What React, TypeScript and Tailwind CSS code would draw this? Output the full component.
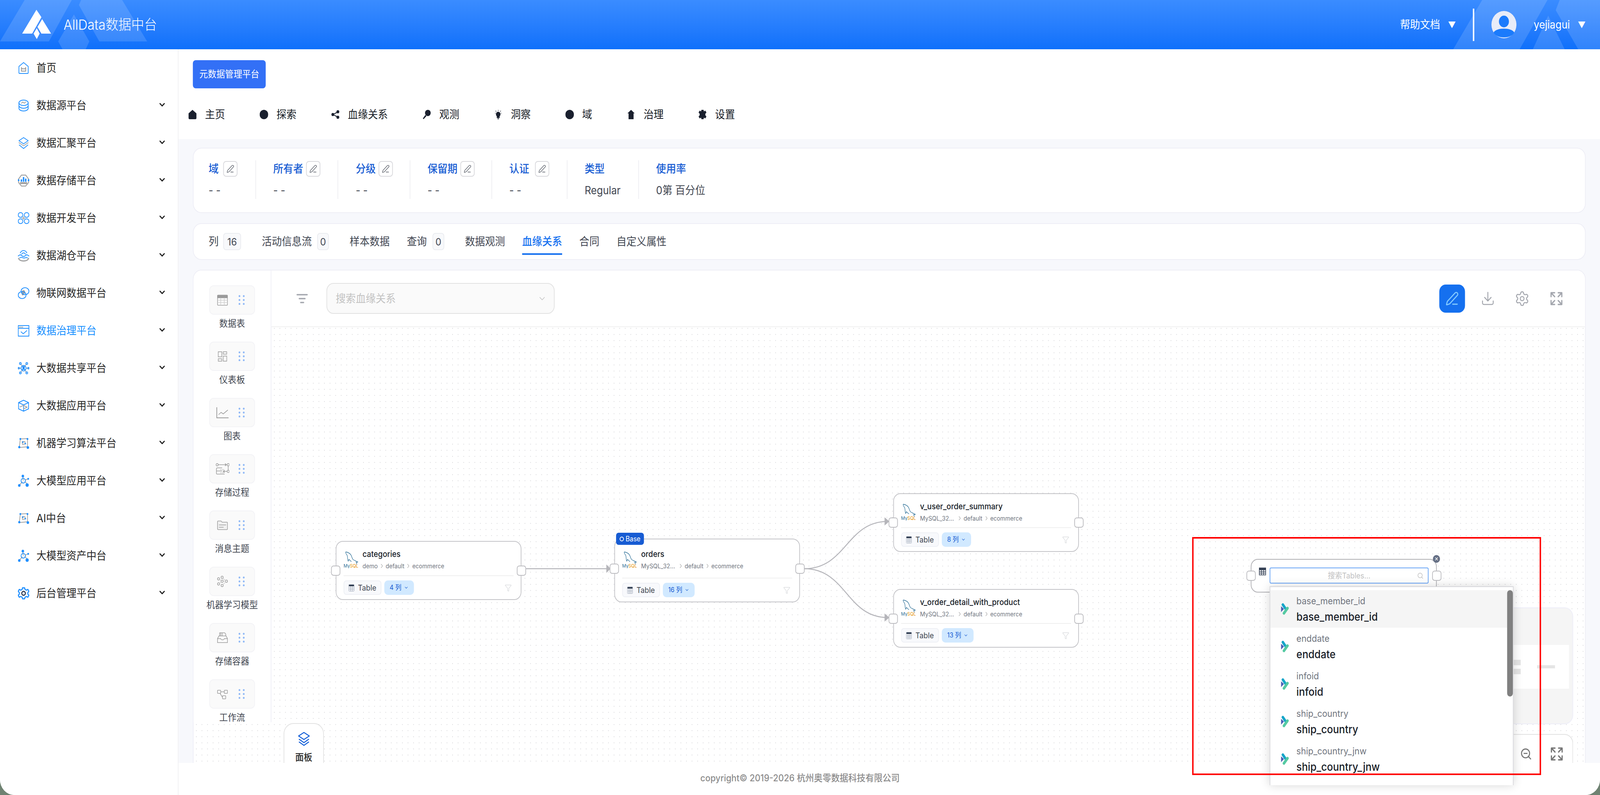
import React from 'react';
import { ChevronDown, Search, Funnel, PenLine, Settings, ZoomOut } from 'lucide-react';

const BLUE = '#1f8fff';
const GRAY = '#a3a3a3';

const sideIcon = (children: React.ReactNode) => (
  <svg width="32" height="32" viewBox="0 0 32 32" fill="none" stroke={BLUE} strokeWidth="2" strokeLinecap="round" strokeLinejoin="round">
    {children}
  </svg>
);

const MlIcon = () =>
  sideIcon(
    <>
      <path d="M7 5 L27 4 L27 25 L4 27 Z M12 12 L20 12 L20 18 L13 19 Z" stroke={GRAY} />
      <g fill={BLUE} stroke="none">
        <circle cx="7" cy="5" r="2.5" />
        <circle cx="27" cy="5" r="2.5" />
        <circle cx="4" cy="26" r="3" />
        <circle cx="28" cy="27" r="3.5" />
        <circle cx="14" cy="13" r="2" />
        <circle cx="21" cy="17" r="2" />
      </g>
    </>
  );

const ModelIcon = () =>
  sideIcon(
    <>
      <path d="M14 6 L15 15 M5 27 L12 19 M20 18 L27 26 M21 14 L29 11" stroke={GRAY} />
      <circle cx="15" cy="16" r="6" />
      <g fill={BLUE} stroke="none">
        <circle cx="14" cy="4" r="3.5" />
        <circle cx="4" cy="28" r="3.5" />
        <circle cx="26" cy="27" r="4.5" />
        <circle cx="29" cy="11" r="2.5" />
      </g>
    </>
  );

const sideItems: { label: string; icon: React.ReactNode; active?: boolean; noArrow?: boolean }[] = [
  {
    label: '首页',
    noArrow: true,
    icon: sideIcon(
      <>
        <path d="M16 2 L29 12 V28 a2 2 0 0 1 -2 2 H5 a2 2 0 0 1 -2 -2 V12 Z" />
        <path d="M10 15 L12 18 H20 L22 15 V24 H10 Z" stroke={GRAY} strokeWidth="2.5" />
      </>
    ),
  },
  {
    label: '数据源平台',
    icon: sideIcon(
      <>
        <ellipse cx="16" cy="9" rx="13" ry="7" />
        <path d="M3 9 v7 c0 4 6 7 13 7 s13 -3 13 -7 V9 M3 16 v7 c0 4 6 7 13 7 s13 -3 13 -7 v-7" />
        <path d="M10 10 l4 -3 l4 3 l4 -3" stroke={GRAY} />
      </>
    ),
  },
  {
    label: '数据汇聚平台',
    icon: sideIcon(
      <>
        <path d="M16 2 L29 10 L16 18 L3 10 Z" />
        <path d="M3 15 L16 23 L29 15" stroke={GRAY} />
        <path d="M4 21 L16 30 L28 21" />
      </>
    ),
  },
  {
    label: '数据存储平台',
    icon: sideIcon(
      <>
        <path d="M10 2 H22 L30 12 V21 L22 30 H10 L2 21 V12 Z" stroke={GRAY} strokeWidth="2.5" />
        <path d="M7 21 H25 V24 H7 Z" fill={GRAY} stroke={GRAY} />
        <path d="M10 19 V13 M16 19 V7 M22 19 V11" strokeWidth="4" strokeLinecap="butt" />
        <circle cx="2" cy="15" r="1.5" fill={BLUE} />
        <circle cx="30" cy="15" r="1.5" fill={BLUE} />
      </>
    ),
  },
  {
    label: '数据开发平台',
    icon: sideIcon(
      <>
        <rect x="1" y="2" width="13" height="12" rx="6" />
        <rect x="18" y="2" width="13" height="12" rx="6" />
        <rect x="1" y="18" width="13" height="12" rx="6" />
        <rect x="18" y="18" width="13" height="12" rx="6" />
        <path d="M16 12 V20 M12 16 H20" stroke={GRAY} />
      </>
    ),
  },
  {
    label: '数据湖仓平台',
    icon: sideIcon(
      <>
        <path d="M7 9 C11 1 21 1 25 9 M11 12 C13 8 19 8 21 12" />
        <path d="M1 17 C5 13 8 13 11 16 C14 19 18 19 21 16 C24 13 27 13 31 17 M5 22 C9 19 12 21 16 22 C20 23 23 19 27 22" />
        <path d="M2 23 C5 32 27 32 30 23" stroke={GRAY} strokeWidth="3" />
      </>
    ),
  },
  {
    label: '物联网数据平台',
    icon: sideIcon(
      <>
        <path d="M12 10 C16 7 22 9 20 15 C18 21 12 24 11 20 C10 16 10 12 12 10 Z" fill={GRAY} stroke="none" />
        <ellipse cx="20" cy="11" rx="11" ry="9" />
        <ellipse cx="12" cy="21" rx="11" ry="9" />
      </>
    ),
  },
  {
    label: '数据治理平台',
    active: true,
    icon: sideIcon(
      <>
        <rect x="1" y="3" width="30" height="27" />
        <path d="M1 10 H31" />
        <path d="M9 19 L15 24 L25 16" />
        <path d="M4 7 H14" stroke={GRAY} strokeDasharray="2 2" />
      </>
    ),
  },
  {
    label: '大数据共享平台',
    icon: sideIcon(
      <>
        <path d="M8 5 L13 12 M24 5 L19 12 M8 27 L13 20 M24 27 L19 20 M3 16 H9 M23 16 H29" stroke={GRAY} />
        <circle cx="16" cy="16" r="7" />
        <circle cx="16" cy="14" r="2.5" fill={BLUE} />
        <path d="M12 20 C13 17 19 17 20 20" fill={BLUE} />
        <circle cx="7" cy="4" r="2.5" />
        <circle cx="25" cy="4" r="2.5" />
        <circle cx="7" cy="28" r="2.5" />
        <circle cx="25" cy="28" r="2.5" />
        <circle cx="2.5" cy="16" r="2" />
        <circle cx="29.5" cy="16" r="2" />
      </>
    ),
  },
  {
    label: '大数据应用平台',
    icon: sideIcon(
      <>
        <path d="M16 2 L30 8 V24 L16 30 L2 24 V8 Z M2 8 L16 14 L30 8 M16 14 V30" />
        <path d="M6 19 L16 15 L26 20 L16 24" stroke={GRAY} />
      </>
    ),
  },
  { label: '机器学习算法平台', icon: <MlIcon /> },
  { label: '大模型应用平台', icon: <ModelIcon /> },
  { label: 'AI中台', icon: <MlIcon /> },
  { label: '大模型资产中台', icon: <ModelIcon /> },
  {
    label: '后台管理平台',
    icon: sideIcon(
      <>
        <path d="M13 2 H19 L20 6 L24 8 L28 6 L31 11 L28 14 V18 L31 21 L28 26 L24 24 L20 26 L19 30 H13 L12 26 L8 24 L4 26 L1 21 L4 18 V14 L1 11 L4 6 L8 8 L12 6 Z" strokeWidth="3" />
        <circle cx="16" cy="16" r="5" stroke="#2b3a55" strokeWidth="3" />
      </>
    ),
  },
];

const navIcon = (path: React.ReactNode) => (
  <svg width="24" height="24" viewBox="0 0 24 24" fill="#1a202e">
    {path}
  </svg>
);

const navItems: { label: string; icon: React.ReactNode }[] = [
  { label: '主页', icon: navIcon(<path d="M12 0 L23 9 V21 a3 3 0 0 1 -3 3 H4 a3 3 0 0 1 -3 -3 V9 Z" />) },
  { label: '探索', icon: navIcon(<circle cx="12" cy="12" r="12" />) },
  {
    label: '血缘关系',
    icon: navIcon(
      <>
        <circle cx="19" cy="5" r="4" />
        <circle cx="5" cy="12" r="4" />
        <circle cx="19" cy="19" r="4" />
        <path d="M5 11 L19 4 V7 L7 12 L19 17 V20 L5 13 Z" />
      </>
    ),
  },
  {
    label: '观测',
    icon: navIcon(
      <>
        <circle cx="15" cy="8" r="8" />
        <path d="M8 13 L1 22 L3 24 L11 16 Z" />
      </>
    ),
  },
  {
    label: '洞察',
    icon: navIcon(
      <>
        <path d="M12 5 a6.5 6.5 0 0 1 4 11.5 V21 H8 V16.5 A6.5 6.5 0 0 1 12 5 Z" />
        <path d="M10 22 H14 V24 H10 Z M11.5 0 H12.5 V3 H11.5 Z M3 8 H5 V9 H3 Z M19 8 H21 V9 H19 Z M5 2 L7 4 L6 5 L4 3 Z M19 2 L20 3 L18 5 L17 4 Z" />
      </>
    ),
  },
  { label: '域', icon: navIcon(<circle cx="12" cy="12" r="12" />) },
  { label: '治理', icon: navIcon(<path d="M12 0 L22 9 H19 V24 H5 V9 H2 Z" />) },
  {
    label: '设置',
    icon: navIcon(
      <path d="M9 0 H15 L16 4 L20 2 L23 7 L20 10 V14 L23 17 L20 22 L16 20 L15 24 H9 L8 20 L4 22 L1 17 L4 14 V10 L1 7 L4 2 L8 4 Z" />
    ),
  },
];

const Dots = () => (
  <div className="grid grid-cols-[5px_5px] gap-x-[7px] gap-y-[5px]">
    {[0, 1, 2, 3, 4, 5].map((i) => (
      <span key={i} className="h-[5px] w-[5px] rounded-full bg-[#8fb8f6]" />
    ))}
  </div>
);

const panelIcon = (w: number, children: React.ReactNode) => (
  <svg width={w} height="30" viewBox={`0 0 ${w} 30`} fill="none" stroke="#9a9a9a" strokeWidth="1.6">
    {children}
  </svg>
);

const panelItems: { label: string; icon: React.ReactNode }[] = [
  {
    label: '数据表',
    icon: panelIcon(
      30,
      <>
        <rect x="1" y="2" width="28" height="26" rx="2" />
        <path d="M1 3 H29 V9 H1 Z" fill="#9a9a9a" />
        <path d="M1 15 H29 M1 21 H29 M10 9 V28 M20 9 V28" stroke="#cfcfcf" />
      </>
    ),
  },
  {
    label: '仪表板',
    icon: panelIcon(
      26,
      <>
        <rect x="1" y="3" width="10" height="13" />
        <rect x="1" y="21" width="10" height="6" />
        <rect x="15" y="3" width="10" height="6" />
        <rect x="15" y="14" width="10" height="13" />
      </>
    ),
  },
  {
    label: '图表',
    icon: panelIcon(
      36,
      <>
        <path d="M2 1 V28 H35" strokeWidth="2" />
        <path d="M7 20 L14 14 L20 18 L33 8" />
      </>
    ),
  },
  {
    label: '存储过程',
    icon: panelIcon(
      38,
      <>
        <circle cx="4" cy="4" r="3" />
        <circle cx="35" cy="4" r="3" />
        <circle cx="35" cy="21" r="3" />
        <path d="M7 4 H29 M26 1 L30 4 L26 7 M35 7 V18 M32 21 H22 M25 18 L21 21 L25 24" />
        <path d="M18 12 H5 a3 3 0 0 0 -3 3 V26 a2 2 0 0 0 2 2 H25 M2 20 H18" />
        <path d="M14 15 V18 M18 15 V18 M22 15 V18 M14 23 V26 M18 23 V26 M22 23 V26" stroke="#b5b5b5" />
      </>
    ),
  },
  {
    label: '消息主题',
    icon: panelIcon(
      30,
      <>
        <path d="M1 6 a2 2 0 0 1 2 -2 H11 L14 7 H27 a2 2 0 0 1 2 2 V24 a2 2 0 0 1 -2 2 H3 a2 2 0 0 1 -2 -2 Z" fill="#f1f1f1" />
        <path d="M5 14 H25 M5 20 H18" />
      </>
    ),
  },
  {
    label: '机器学习模型',
    icon: panelIcon(
      30,
      <>
        <circle cx="4" cy="8" r="3" />
        <circle cx="4" cy="21" r="3" />
        <circle cx="14" cy="4" r="3" />
        <circle cx="14" cy="14" r="3" />
        <circle cx="14" cy="25" r="3" />
        <circle cx="26" cy="14" r="3" />
        <path d="M7 9 L11 13 M7 20 L11 15 M17 14 H23 M16 7 L24 12 M16 23 L24 16" stroke="#cfcfcf" />
      </>
    ),
  },
  {
    label: '存储容器',
    icon: panelIcon(
      30,
      <>
        <path d="M1 17 L5 10 H25 L29 17 V27 H1 Z" />
        <path d="M7 10 V2 H21 L24 5 V10 M10 2 V10 M14 2 V10" />
        <path d="M1 17 H10 a5 3 0 0 0 10 0 H29" />
      </>
    ),
  },
  {
    label: '工作流',
    icon: panelIcon(
      30,
      <>
        <rect x="1" y="5" width="9" height="8" rx="1" />
        <rect x="20" y="5" width="9" height="8" rx="1" />
        <rect x="15" y="19" width="9" height="8" rx="1" />
        <path d="M10 9 H20 M8 13 L15 23" />
      </>
    ),
  },
];

const MySqlLogo = () => (
  <svg width="44" height="44" viewBox="0 0 44 44" fill="none" className="shrink-0">
    <path
      d="M6 2 C12 3 17 5 20 9 C24 14 23 19 27 22 C32 24 36 27 40 28 L35 29 L38 34 M6 2 C5 5 8 8 10 11 C12 15 10 19 13 26 L15 21 C17 23 19 25 22 27"
      stroke="#2b6e96"
      strokeWidth="1.3"
      strokeLinejoin="round"
    />
    <text x="0" y="42" fontSize="12" fontFamily="Inter, sans-serif">
      <tspan fill="#2b6e96">My</tspan>
      <tspan fill="#e48e00">SQL</tspan>
    </text>
  </svg>
);

const TableGlyph = () => (
  <svg width="16" height="18" viewBox="0 0 16 18" fill="none" className="shrink-0">
    <rect x="0.5" y="0.5" width="15" height="17" rx="1.5" stroke="#98a2b3" />
    <path d="M1 1 H15 V5 H1 Z" fill="#344054" />
    <path d="M1 9 H15 M1 13 H15 M5.5 5 V17 M10.5 5 V17" stroke="#98a2b3" />
  </svg>
);

const Handle = ({ className }: { className: string }) => (
  <span className={`absolute h-[26px] w-[26px] rounded-[7px] border-2 border-[#bcbcc0] bg-white ${className}`} />
);

const Crumb = () => (
  <svg width="6" height="12" viewBox="0 0 6 12" fill="none" stroke="#999" strokeWidth="1.2" className="mx-[8px]">
    <path d="M1 1 L5 6 L1 11" />
  </svg>
);

const TableNode = ({
  className,
  title,
  source,
  count,
}: {
  className: string;
  title: string;
  source: string;
  count: string;
}) => (
  <div className={`absolute flex w-[520px] flex-col rounded-[20px] border-2 border-[#c4c4c8] bg-white px-[20px] ${className}`}>
    <div className="flex flex-1 items-center gap-[9px] pt-[6px]">
      <MySqlLogo />
      <div className="min-w-0">
        <div className="text-[21px] leading-[32px] font-medium text-[#181d27]">{title}</div>
        <div className="flex items-center text-[16px] leading-[28px] text-[#717680]">
          <span className={source === 'demo' ? '' : 'w-[100px]'}>{source}</span>
          <Crumb />
          <span>default</span>
          <Crumb />
          <span>ecommerce</span>
        </div>
      </div>
    </div>
    <div className="flex items-center gap-[8px] border-t-2 border-[#efefef] pt-[11px] pb-[11px]">
      <span className="flex h-[37px] w-[106px] items-center justify-center gap-[10px] rounded-[8px] border-2 border-[#eef0f5] bg-[#f8f9fc] text-[20px] text-[#414651]">
        <TableGlyph />
        Table
      </span>
      <span className="flex h-[37px] items-center gap-[7px] rounded-[10px] bg-[#d1e9ff] px-[15px] text-[17px] text-[#175cd3]">
        {count} 列
        <ChevronDown size={13} />
      </span>
      <Funnel size={20} className="mr-[5px] ml-auto text-[#d5d7da]" strokeWidth={1.5} />
    </div>
  </div>
);

const ExpandIcon = ({ color }: { color: string }) => (
  <svg width="34" height="34" viewBox="0 0 34 34" fill="none" stroke={color} strokeWidth="3.4" strokeLinecap="round" strokeLinejoin="round">
    <path d="M2 12 V2 H12 M3 3 L12 12 M22 2 H32 V12 M31 3 L22 12 M2 22 V32 H12 M3 31 L12 22 M22 32 H32 V22 M31 31 L22 22" />
  </svg>
);

const ColumnGlyph = () => (
  <svg width="23" height="30" viewBox="0 0 23 30" fill="none" className="shrink-0">
    <path d="M1 8 L9 15 L1 23 Z" fill="#4a5fb5" />
    <path d="M6 4 L14 15" stroke="#16a5c8" strokeWidth="7" strokeLinecap="round" />
    <path d="M19 13 L9 26" stroke="#55c9a2" strokeWidth="7" strokeLinecap="round" />
  </svg>
);

const infoCols: { label: string; value: string; edit?: boolean; col: string; gap: string }[] = [
  { label: '域', value: '- -', edit: true, col: 'w-[133px] border-r-2', gap: 'gap-[13px]' },
  { label: '所有者', value: '- -', edit: true, col: 'w-[230px] pl-[48px] border-r-2', gap: 'gap-[8px]' },
  { label: '分级', value: '- -', edit: true, col: 'w-[202px] pl-[49px] border-r-2', gap: 'gap-[8px]' },
  { label: '保留期', value: '- -', edit: true, col: 'w-[229px] pl-[48px] border-r-2', gap: 'gap-[8px]' },
  { label: '认证', value: '- -', edit: true, col: 'w-[211px] pl-[48px] border-r-2', gap: 'gap-[16px]' },
  { label: '类型', value: 'Regular', col: 'w-[200px] pl-[48px] border-r-2', gap: '' },
  { label: '使用率', value: '0第 百分位', col: 'pl-[48px]', gap: '' },
];

const tabs: { label: string; badge?: string; badgeWidth?: string; gap?: string; active?: boolean }[] = [
  { label: '列', badge: '16', badgeWidth: 'w-[50px]', gap: 'gap-[13px]' },
  { label: '活动信息流', badge: '0', badgeWidth: 'w-[33px]', gap: 'gap-[15px]' },
  { label: '样本数据' },
  { label: '查询', badge: '0', badgeWidth: 'w-[33px]', gap: 'gap-[16px]' },
  { label: '数据观测' },
  { label: '血缘关系', active: true },
  { label: '合同' },
  { label: '自定义属性' },
];

const columns = ['base_member_id', 'enddate', 'infoid', 'ship_country', 'ship_country_jnw'];

export default function App() {
  return (
    <div className="h-screen w-screen overflow-hidden">
      <div className="h-[2034px] w-[4480px] origin-top-left scale-x-[0.914286] overflow-hidden bg-[#6f8272] [font-family:Inter,'Noto_Sans_CJK_SC',sans-serif]">
        <div className="relative flex h-full flex-col overflow-hidden rounded-b-[40px] bg-white">
          {/* header */}
          <header className="relative flex h-[126px] shrink-0 items-center bg-gradient-to-b from-[#3a8cff] to-[#0e70fb] text-white">
            <svg className="absolute inset-0" width="4480" height="126" viewBox="0 0 4480 126" fill="#ffffff" fillOpacity="0.14">
              <path d="M69 0 H201 L137 106 H0 Z" />
              <path d="M227 0 H342 L412 106 H278 L221 13 Z" />
              <path d="M207 37 L250 106 L240 126 H175 L163 106 Z" />
              <path d="M4150 0 H4333 L4255 126 H4069 Z" />
              <path d="M4367 0 H4480 V126 H4419 L4356 26 Z" />
              <path d="M4292 126 L4335 40 L4381 126 Z" />
            </svg>
            <svg className="relative ml-[62px] shrink-0" width="82" height="76" viewBox="62 16 82 76" fill="#ffffff">
              <path d="M102 16 L116 35 L90 77 H62 Z" />
              <path d="M118 40 L143 77 H116 L105 60 Z" />
              <path d="M103 63 L111 77 L103 91 L94 77 Z" />
            </svg>
            <span className="relative ml-[34px] text-[36px] font-light">AllData数据中台</span>
            <div className="relative ml-auto flex items-center">
              <span className="text-[28px]">帮助文档</span>
              <span className="ml-[22px] text-[22px]">▼</span>
              <span className="mx-[48px] h-[83px] w-[4px] bg-white" />
              <svg width="70" height="70" viewBox="0 0 70 70">
                <circle cx="35" cy="35" r="35" fill="#e8ecf8" />
                <ellipse cx="35" cy="27" rx="14" ry="15" fill="#1b7bfc" />
                <path d="M6 55 C14 42 56 42 64 55 C56 72 14 72 6 55 Z" fill="#1b7bfc" />
              </svg>
              <span className="ml-[48px] text-[28px]">yejiagui</span>
              <span className="mr-[40px] ml-[22px] text-[22px]">▼</span>
            </div>
          </header>

          <div className="flex min-h-0 flex-1">
            {/* sidebar */}
            <aside className="w-[500px] shrink-0 border-r-2 border-[#f0f0f2] bg-white">
              {sideItems.map((item) => (
                <div key={item.label} className="flex h-[96px] items-center pr-[32px] pl-[50px]">
                  {item.icon}
                  <span className={`ml-[20px] text-[28px] ${item.active ? 'text-[#1890ff]' : 'text-[#262626]'}`}>{item.label}</span>
                  {!item.noArrow && <ChevronDown size={24} strokeWidth={3} className="mb-[4px] ml-auto text-[#1f1f1f]" />}
                </div>
              ))}
            </aside>

            <main className="flex min-w-0 flex-1 flex-col">
              <div className="h-[230px] shrink-0 bg-white pt-[28px]">
                <button className="ml-[40px] flex h-[72px] w-[204px] items-center justify-center rounded-[8px] bg-[#3370f6] text-[24px] text-white">
                  元数据管理平台
                </button>
                <nav className="mt-[46px] ml-[27px] flex items-center gap-[97px]">
                  {navItems.map((item) => (
                    <div key={item.label} className="flex items-center gap-[23px] text-[28px] text-[#181d27]">
                      {item.icon}
                      <span>{item.label}</span>
                    </div>
                  ))}
                </nav>
              </div>

              <div className="min-h-0 flex-1 overflow-hidden bg-[#f7f8fc] px-[40px] pt-[22px]">
                {/* summary */}
                <div className="flex h-[167px] rounded-[24px] border-2 border-[#eeeef6] bg-white pt-[30px] pl-[42px]">
                  {infoCols.map((col) => (
                    <div key={col.label} className={`h-[99px] border-[#eeeef2] ${col.col}`}>
                      <div className={`flex h-[44px] items-center text-[28px] font-medium text-[#175cd3] ${col.gap}`}>
                        {col.label}
                        {col.edit && (
                          <span className="flex h-[40px] w-[40px] items-center justify-center rounded-[8px] border-2 border-[#d8d8dc] text-[#535862]">
                            <PenLine size={22} strokeWidth={1.5} />
                          </span>
                        )}
                      </div>
                      <div className="mt-[13px] text-[28px] leading-[40px] text-[#414651]">{col.value}</div>
                    </div>
                  ))}
                </div>

                {/* tabs */}
                <div className="mt-[26px] flex h-[94px] items-start gap-[48px] rounded-[24px] border-2 border-[#eeeef6] bg-white pt-[15px] pl-[42px]">
                  {tabs.map((tab) => (
                    <div
                      key={tab.label}
                      className={`flex h-[64px] items-center border-b-4 text-[28px] ${tab.gap ?? ''} ${
                        tab.active ? 'border-[#1570ef] font-medium text-[#1570ef]' : 'border-transparent text-[#414651]'
                      } ${tab.badge ? 'pr-[10px]' : ''}`}
                    >
                      {tab.label}
                      {tab.badge && (
                        <span className={`flex h-[44px] items-center justify-center rounded-[8px] border-2 border-[#eaecf0] bg-[#f8f9fb] text-[26px] ${tab.badgeWidth}`}>
                          {tab.badge}
                        </span>
                      )}
                    </div>
                  ))}
                </div>

                {/* lineage */}
                <div className="relative mt-[25px] h-[1300px] rounded-t-[24px] border-2 border-[#eeeef6] bg-white">
                  <div className="absolute inset-0 overflow-hidden rounded-t-[22px] bg-[radial-gradient(circle,#c4c4c8_0.9px,transparent_1.2px)] bg-[size:15.6px_15.6px]">
                    <svg className="absolute top-0 left-0" width="3896" height="1260" viewBox="542 692 3896 1260" fill="none" stroke="#b5b5ba" strokeWidth="2.5">
                      <path d="M1473 1455 H1707" />
                      <path d="M2252 1455 C2370 1455 2370 1334 2486 1334" />
                      <path d="M2252 1455 C2370 1455 2370 1580 2486 1580" />
                      <path d="M2478 1326 L2488 1334 L2478 1342 Z M2478 1572 L2488 1580 L2478 1588 Z" fill="#b5b5ba" />
                      <path d="M1699 1447 L1708 1455 L1699 1463 Z" fill="#b5b5ba" />
                    </svg>

                    <TableNode className="top-[692px] left-[398px] h-[151px]" title="categories" source="demo" count="4" />
                    <Handle className="top-[755px] left-[385px]" />
                    <Handle className="top-[755px] left-[905px]" />

                    <TableNode className="top-[686px] left-[1178px] h-[163px]" title="orders" source="MySQL_32..." count="16" />
                    <Handle className="top-[750px] left-[1165px]" />
                    <Handle className="top-[750px] left-[1685px]" />
                    <span className="absolute top-[671px] left-[1183px] flex h-[31px] w-[78px] items-center justify-center gap-[5px] rounded-[7px] bg-[#175cd3] text-[18px] text-white">
                      <span className="h-[12px] w-[12px] rounded-full border-2 border-white" />
                      Base
                    </span>

                    <TableNode className="top-[570px] left-[1959px] h-[150px]" title="v_user_order_summary" source="MySQL_32..." count="8" />
                    <Handle className="top-[632px] left-[1946px]" />
                    <Handle className="top-[632px] left-[2466px]" />

                    <TableNode className="top-[815px] left-[1959px] h-[150px]" title="v_order_detail_with_product" source="MySQL_32..." count="13" />
                    <Handle className="top-[878px] left-[1946px]" />
                    <Handle className="top-[878px] left-[2466px]" />

                    {/* node being added */}
                    <div className="absolute top-[738px] left-[2960px] flex h-[86px] w-[521px] items-start rounded-[20px] border-2 border-[#b0b0b4] bg-white pt-[20px] pl-[21px]">
                      <svg width="20" height="20" viewBox="0 0 20 20" fill="none" stroke="#344054" strokeWidth="1.6">
                        <rect x="1" y="1" width="18" height="18" fill="#ffffff" />
                        <path d="M1 2 H19 V6 H1 Z" fill="#344054" />
                        <path d="M1 10.5 H19 M1 14.5 H19 M7 6 V19 M13 6 V19" />
                      </svg>
                    </div>
                    <div className="absolute top-[760px] left-[3013px] flex h-[41px] w-[445px] items-center justify-center rounded-[4px] border-2 border-[#69a5f5] bg-white text-[20px] text-[#bfbfbf]">
                      搜索Tables...
                      <Search size={18} className="absolute right-[12px] text-[#bfbfbf]" />
                    </div>
                    <Handle className="top-[768px] left-[2948px]" />
                    <Handle className="top-[768px] left-[3468px]" />
                    <span className="absolute top-[728px] left-[3470px] flex h-[20px] w-[20px] items-center justify-center rounded-full bg-[#667085] text-[14px] leading-none text-white">
                      ✕
                    </span>

                    {/* minimap */}
                    <div className="absolute top-[862px] left-[3600px] h-[299px] w-[263px] overflow-hidden rounded-[24px] border-2 border-[#eeeef8] bg-[#f5f5f5]">
                      <div className="mt-[94px] flex h-[112px] w-[249px] items-center bg-white">
                        <div className="ml-[84px] flex flex-col gap-[9px]">
                          <span className="h-[14px] w-[30px] bg-[#e5e5e5]" />
                          <span className="h-[14px] w-[30px] bg-[#e5e5e5]" />
                        </div>
                        <span className="ml-[46px] h-[8px] w-[50px] bg-[#e5e5e5]" />
                      </div>
                    </div>

                    {/* zoom controls */}
                    <div className="absolute top-[1186px] left-[3600px] flex h-[110px] w-[263px] items-start rounded-tr-[24px] border-t-2 border-r-2 border-[#e2e2e2] bg-white pt-[32px] pl-[114px]">
                      <ZoomOut size={34} className="text-[#777777]" />
                      <span className="ml-[52px]">
                        <ExpandIcon color="#777777" />
                      </span>
                    </div>

                    {/* panel toggle */}
                    <div className="absolute top-[1158px] left-[252px] flex h-[130px] w-[113px] flex-col items-center rounded-t-[28px] border-2 border-[#e2e2e2] bg-white pt-[20px] text-[24px] font-medium text-[#262626]">
                      <svg width="36" height="38" viewBox="0 0 36 38" fill="none" stroke="#0d5bd7" strokeWidth="2.6" strokeLinejoin="round">
                        <path d="M18 2 L33 11 L18 20 L3 11 Z" />
                        <path d="M4 19 L18 28 L32 19 M4 26 L18 35 L32 26" />
                      </svg>
                      <span className="mt-[10px]">面板</span>
                    </div>
                  </div>

                  {/* foreground panels */}
                  <div className="relative flex items-start">
                    <div className="h-[1156px] w-[218px] shrink-0 overflow-hidden rounded-tl-[22px] border-r-2 border-[#eeeef6] bg-white pt-[38px]">
                      {panelItems.map((item) => (
                        <div key={item.label} className="flex h-[144px] flex-col items-center">
                          <div className="flex h-[75px] w-[128px] items-center rounded-[12px] border-2 border-[#f3f3f6] bg-[#fafafa]">
                            <div className="ml-[13px] flex w-[44px] justify-center">{item.icon}</div>
                            <div className="ml-[23px]">
                              <Dots />
                            </div>
                          </div>
                          <span className="mt-[6px] text-[24px] leading-[34px] whitespace-nowrap text-[#414651]">{item.label}</span>
                        </div>
                      ))}
                    </div>
                    <div className="flex h-[145px] flex-1 items-center rounded-tr-[22px] border-b-2 border-[#f0f0f0] bg-white pr-[32px] pl-[70px]">
                      <svg width="32" height="26" viewBox="0 0 32 26" stroke="#a4a7ae" strokeWidth="3.6" strokeLinecap="round">
                        <path d="M2 3 H30 M8 13 H24 M12 23 H20" />
                      </svg>
                      <div className="ml-[52px] flex h-[79px] w-[639px] items-center justify-between rounded-[20px] border-2 border-[#e2e2e2] bg-[#fafafa] pr-[20px] pl-[24px] text-[28px] text-[#c2c2c2]">
                        搜索血缘关系
                        <ChevronDown size={26} strokeWidth={1.5} />
                      </div>
                      <div className="ml-auto flex items-center">
                        <span className="mr-[16px] flex h-[72px] w-[72px] items-center justify-center rounded-[18px] bg-[#1570ef] text-[#84caff]">
                          <PenLine size={38} strokeWidth={1.8} />
                        </span>
                        <span className="flex w-[96px] justify-center text-[#a4a7ae]">
                          <svg width="34" height="36" viewBox="0 0 34 36" fill="none" stroke="currentColor" strokeWidth="2.6" strokeLinecap="round" strokeLinejoin="round">
                            <path d="M17 2 V24 M8 15 L17 24 L26 15 M2 24 V29 a4 4 0 0 0 4 4 H28 a4 4 0 0 0 4 -4 V24" />
                          </svg>
                        </span>
                        <span className="flex w-[96px] justify-center text-[#a4a7ae]">
                          <Settings size={42} strokeWidth={1.5} />
                        </span>
                        <span className="flex w-[96px] justify-center">
                          <ExpandIcon color="#a4a7ae" />
                        </span>
                      </div>
                    </div>
                  </div>
                </div>
              </div>

              <footer className="flex h-[82px] shrink-0 items-center justify-center bg-white pr-[500px] pb-[4px] text-[24px] font-medium text-[#8c8c8c]">
                copyright© 2019-2026 杭州奥零数据科技有限公司
              </footer>
            </main>
          </div>

          {/* table search dropdown */}
          <div className="absolute top-[1500px] left-[3555px] h-[509px] w-[683px] overflow-hidden border-x-2 border-t-2 border-[#d8d8dc] bg-white pt-[8px] shadow-[0_0_24px_rgba(0,0,0,0.16)]">
            {columns.map((name, i) => (
              <div key={name} className={`flex h-[96px] items-center pl-[29px] ${i === 0 ? 'bg-[#f5f5f5]' : ''}`}>
                <ColumnGlyph />
                <div className="ml-[21px]">
                  <div className="text-[24px] leading-[40px] text-[#717680]">{name}</div>
                  <div className="text-[28px] leading-[40px] font-medium text-[#181d27]">{name}</div>
                </div>
              </div>
            ))}
            <span className="absolute top-[8px] right-0 h-[272px] w-[16px] rounded-full bg-[#808080]" />
          </div>

          {/* annotation */}
          <div className="pointer-events-none absolute top-[1374px] left-[3338px] h-[609px] w-[977px] border-[4px] border-[#ff0000]" />
        </div>
      </div>
    </div>
  );
}
